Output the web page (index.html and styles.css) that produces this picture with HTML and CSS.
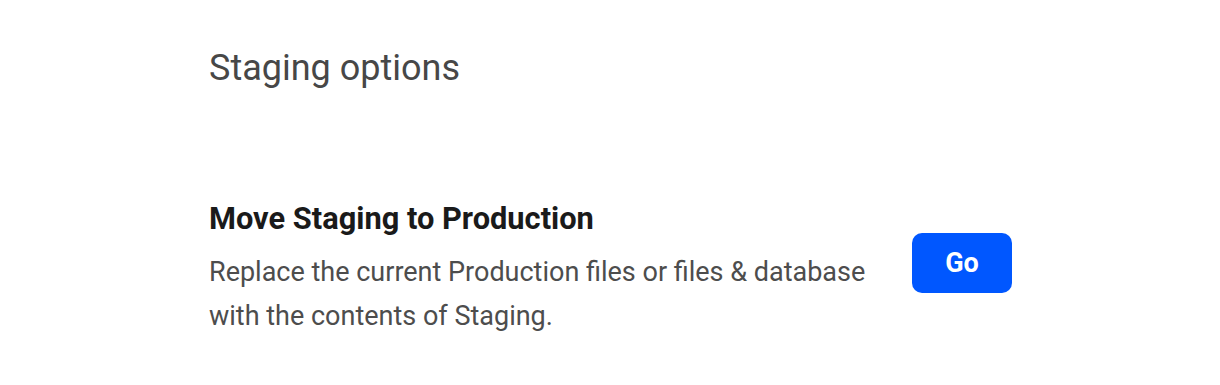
FILE: index.html
```html
<!DOCTYPE html>
<html lang="en">

<head>
    <meta charset="UTF-8">
    <meta name="viewport" content="width=device-width, initial-scale=1.0">
    <title>Staging options</title>
    <link rel="stylesheet" href="styles.css">
</head>

<body>

    <div class="container">
        <h1>Staging options</h1>

        <div class="option-row">
            <div class="option-text">
                <h2>Move Staging to Production</h2>
                <p>Replace the current Production files or files &amp; database with the contents of Staging.</p>
            </div>
            <button type="button">Go</button>
        </div>
    </div>

</body>

</html>
```

FILE: styles.css
```css
body {
    font-family: Roboto, 'Liberation Sans', sans-serif;
    background-color: #fff;
    margin: 0;
    padding: 0;
}

.container {
    width: 803px;
    padding: 45px 0 0 209px;
}

h1 {
    font-size: 36px;
    font-weight: 400;
    color: #474747;
    margin: 0;
    line-height: 46px;
}

.option-row {
    display: flex;
    align-items: flex-start;
    justify-content: space-between;
    margin-top: 110px;
}

.option-text {
    width: 680px;
}

h2 {
    font-size: 30.8px;
    font-weight: 700;
    color: #1a1a1a;
    margin: 0 0 13px;
    line-height: 36px;
}

p {
    font-size: 27px;
    color: #4d4d4d;
    margin: 0;
    line-height: 44px;
}

button {
    background-color: #0057ff;
    color: #fff;
    font-family: inherit;
    font-size: 27px;
    font-weight: 700;
    width: 100px;
    height: 60px;
    margin-top: 32px;
    border: none;
    border-radius: 10px;
    cursor: pointer;
}
```
